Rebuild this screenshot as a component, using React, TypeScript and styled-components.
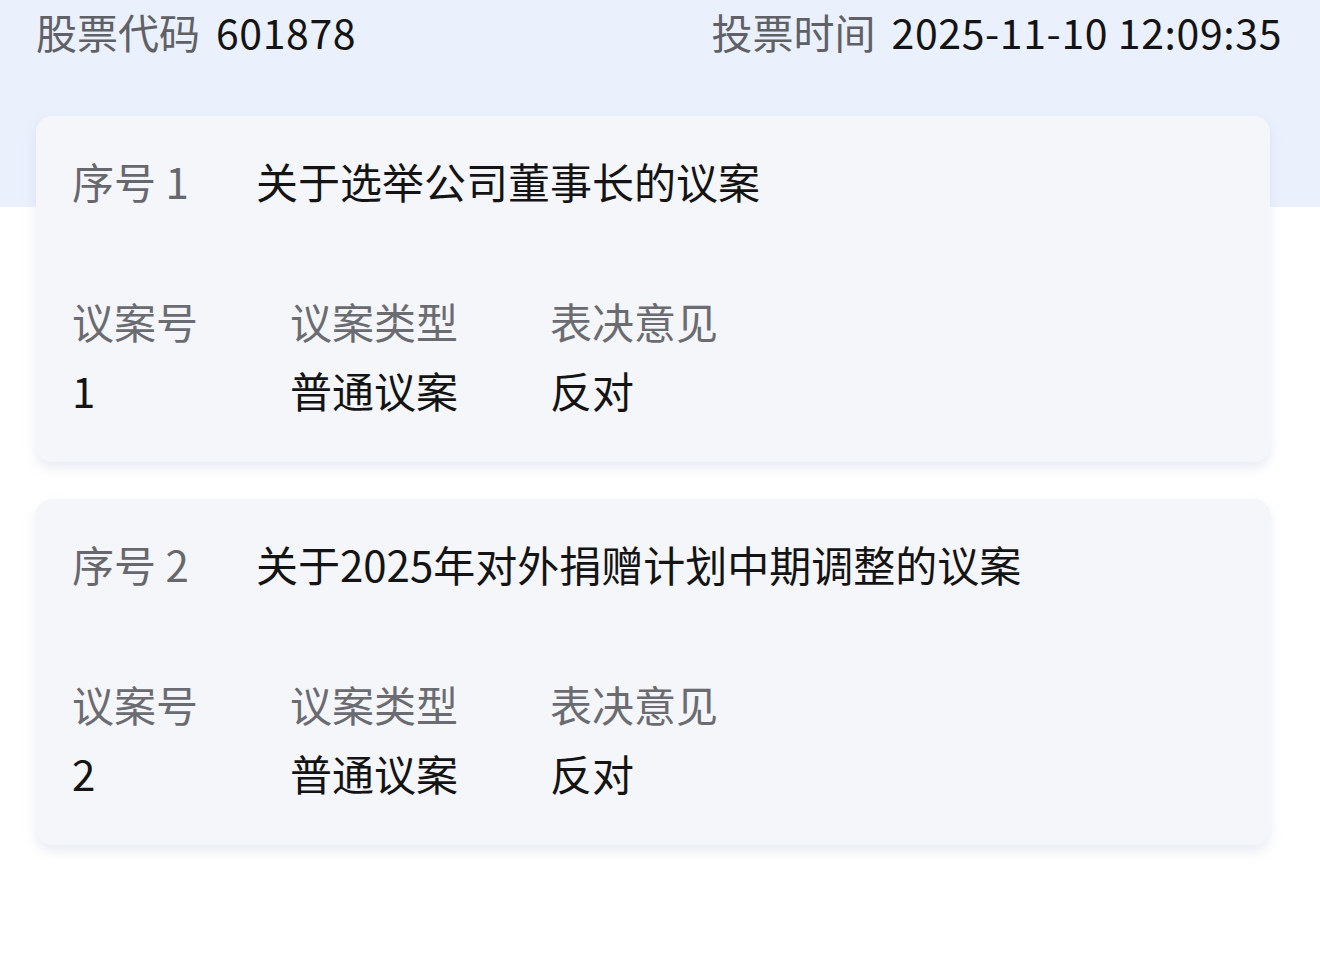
import React from "react";
import styled, { createGlobalStyle } from "styled-components";

const GlobalStyle = createGlobalStyle`
    body {
        margin: 0;
        background: #ffffff;
        font-family: "Noto Sans CJK SC", "Noto Sans", sans-serif;
    }
`;

type Motion = {
    seq: number;
    title: string;
    no: string;
    kind: string;
    opinion: string;
};

const motions: Motion[] = [
    { seq: 1, title: "关于选举公司董事长的议案", no: "1", kind: "普通议案", opinion: "反对" },
    { seq: 2, title: "关于2025年对外捐赠计划中期调整的议案", no: "2", kind: "普通议案", opinion: "反对" },
];

const App: React.FC = () => (
    <Page>
        <GlobalStyle />
        <Banner>
            <InfoItem>
                <InfoLabel>股票代码</InfoLabel>
                <InfoValue>601878</InfoValue>
            </InfoItem>
            <InfoItem>
                <InfoLabel>投票时间</InfoLabel>
                <InfoValue>2025-11-10 12:09:35</InfoValue>
            </InfoItem>
        </Banner>
        <CardList>
            {motions.map(m => (
                <Card key={m.seq}>
                    <TitleRow>
                        <Seq>序号 {m.seq}</Seq>
                        <Title>{m.title}</Title>
                    </TitleRow>
                    <DetailGrid>
                        <Label>议案号</Label>
                        <Label>议案类型</Label>
                        <Label>表决意见</Label>
                        <Value>{m.no}</Value>
                        <Value>{m.kind}</Value>
                        <Value>{m.opinion}</Value>
                    </DetailGrid>
                </Card>
            ))}
        </CardList>
    </Page>
);

export default App;

/* ~~~~~~ -- styling -- ~~~~~~ */

const Page = styled.div`
    position: relative;
    width: 1320px;
    min-height: 956px;
    background: linear-gradient(#eaf0fc 0, #eaf0fc 207px, #ffffff 207px);
`;

const Banner = styled.div`
    display: flex;
    justify-content: space-between;
    align-items: center;
    height: 62px;
    padding: 0 38px 0 36px;
`;

const InfoItem = styled.div`
    display: flex;
    align-items: center;
    gap: 16px;
    font-size: 41px;
    line-height: 56px;
`;

const InfoLabel = styled.span`
    color: #5f6166;
`;

const InfoValue = styled.span`
    color: #141414;
    letter-spacing: 0.6px;
`;

const CardList = styled.div`
    display: flex;
    flex-direction: column;
    gap: 37px;
    padding: 54px 50px 0 36px;
`;

const Card = styled.div`
    background: #f5f6fa;
    border-radius: 16px;
    box-shadow: 0 6px 12px rgba(190, 198, 220, 0.35);
    padding: 36px 36px 42px;
    height: 346px;
    box-sizing: border-box;
`;

const TitleRow = styled.div`
    display: flex;
    align-items: center;
    font-size: 42px;
    line-height: 58px;
`;

const Seq = styled.div`
    width: 184px;
    flex-shrink: 0;
    color: #66686d;
`;

const Title = styled.div`
    color: #141414;
`;

const DetailGrid = styled.div`
    display: grid;
    grid-template-columns: 218px 260px auto;
    row-gap: 11px;
    margin-top: 82px;
    font-size: 42px;
    line-height: 58px;
`;

const Label = styled.div`
    color: #6a6c71;
`;

const Value = styled.div`
    color: #141414;
`;
